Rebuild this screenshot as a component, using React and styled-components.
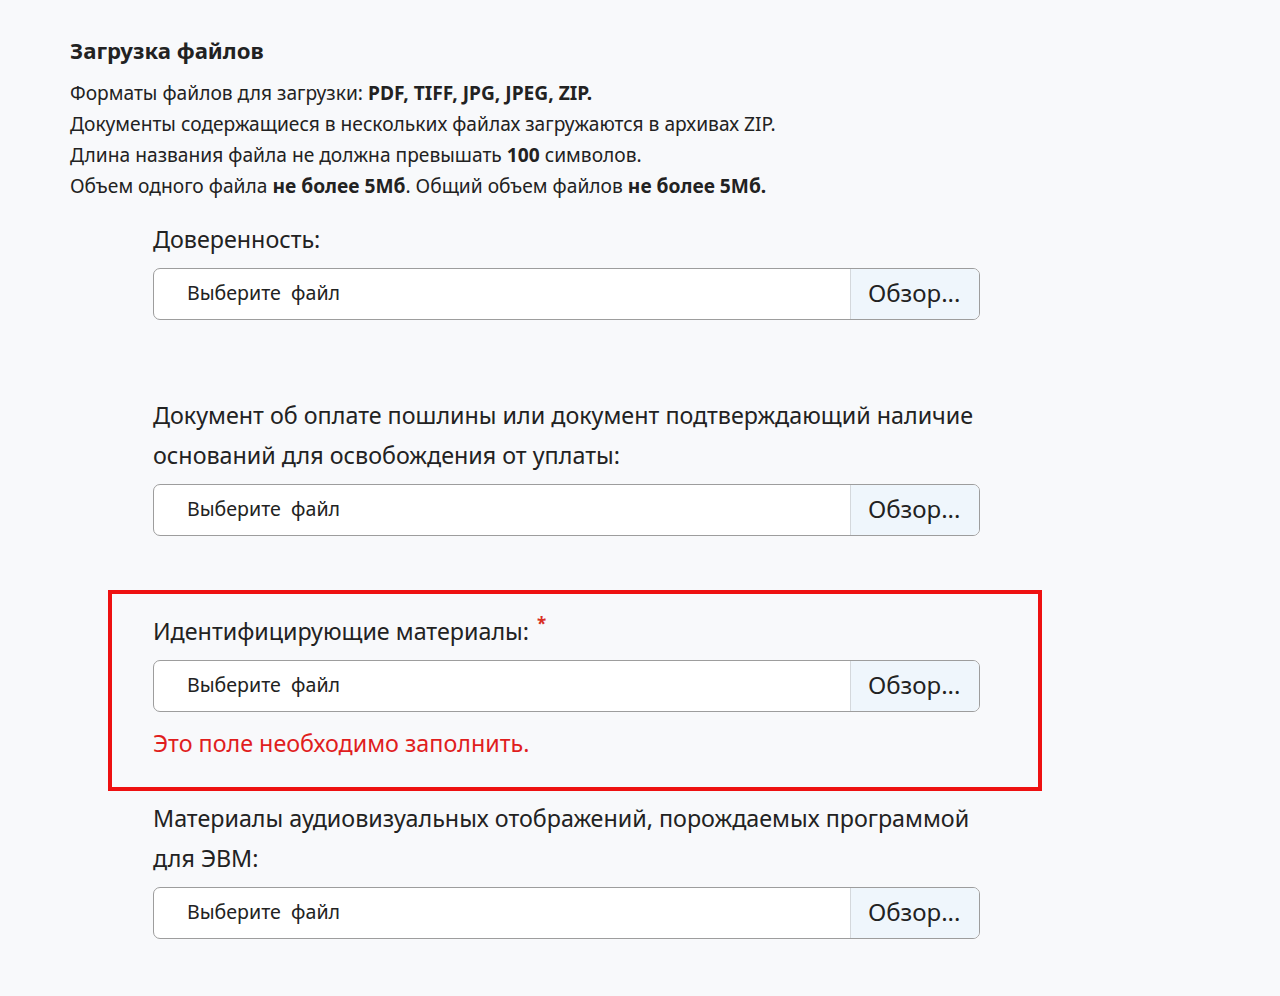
import React from "react";
import styled, { createGlobalStyle } from "styled-components";

const Global = createGlobalStyle`
  html, body { margin: 0; padding: 0; background: #f8f9fb; }
  body { font-family: "Noto Sans", "Open Sans", sans-serif; color: #222; }
`;

const Page = styled.div`
  padding: 37px 0 60px 70px;
  width: 1000px;
`;

const Title = styled.h2`
  margin: 0 0 12px;
  font-size: 22.2px;
  line-height: 28px;
  font-weight: 700;
  color: #222;
`;

const Info = styled.div`
  font-size: 19.2px;
  line-height: 31px;
  color: #222;
  b { font-weight: 700; }
`;

const Fields = styled.div`
  margin: 18px 0 0 83px;
  width: 827px;
  display: flex;
  flex-direction: column;
`;

const Field = styled.div`
  margin-bottom: ${(p) => p.$after || 0}px;
`;

const Highlight = styled.div`
  margin: 0 -62px ${(p) => p.$after || 0}px -45px;
  padding: 17px 58px 29px 41px;
  border: 4px solid #ee1111;
`;

const Label = styled.div`
  font-size: 23.3px;
  line-height: 40px;
  color: #222;
  margin-bottom: 9px;
`;

const Required = styled.span`
  color: #d93025;
  font-size: 17px;
  vertical-align: top;
  line-height: 26px;
  margin-left: 8px;
  font-weight: 700;
`;

const FileBox = styled.label`
  display: flex;
  height: 52px;
  box-sizing: border-box;
  border: 1.5px solid #9d9d9d;
  border-radius: 7px;
  background: #fff;
  overflow: hidden;
  cursor: pointer;
`;

const FileName = styled.span`
  flex: 1;
  display: flex;
  align-items: center;
  padding: 0 0 3px 33px;
  font-size: 19.6px;
  color: #222;
  white-space: pre;
`;

const Browse = styled.span`
  display: flex;
  align-items: center;
  width: 129px;
  box-sizing: border-box;
  padding: 0 0 4px 17px;
  border-left: 1.5px solid #d4d8dc;
  background: #eff6fc;
  font-size: 24px;
  color: #222;
`;

const ErrorText = styled.div`
  margin-top: 16px;
  font-size: 23.3px;
  line-height: 30px;
  color: #e01e1e;
`;

function FileInput() {
  return (
    <FileBox>
      <FileName>{"Выберите  файл"}</FileName>
      <Browse>Обзор...</Browse>
    </FileBox>
  );
}

export default function App() {
  return (
    <>
      <Global />
      <Page>
        <Title>Загрузка файлов</Title>
        <Info>
          <div>
            Форматы файлов для загрузки: <b>PDF, TIFF, JPG, JPEG, ZIP.</b>
          </div>
          <div>Документы содержащиеся в нескольких файлах загружаются в архивах ZIP.</div>
          <div>
            Длина названия файла не должна превышать <b>100</b> символов.
          </div>
          <div>
            Объем одного файла <b>не более 5Мб</b>. Общий объем файлов <b>не более 5Мб.</b>
          </div>
        </Info>
        <Fields>
          <Field $after={75}>
            <Label>Доверенность:</Label>
            <FileInput />
          </Field>
          <Field $after={54}>
            <Label>
              Документ об оплате пошлины или документ подтверждающий наличие оснований для освобождения от уплаты:
            </Label>
            <FileInput />
          </Field>
          <Highlight $after={7}>
            <Label>
              Идентифицирующие материалы:<Required>*</Required>
            </Label>
            <FileInput />
            <ErrorText>Это поле необходимо заполнить.</ErrorText>
          </Highlight>
          <Field>
            <Label>
              Материалы аудиовизуальных отображений, порождаемых программой для ЭВМ:
            </Label>
            <FileInput />
          </Field>
        </Fields>
      </Page>
    </>
  );
}
